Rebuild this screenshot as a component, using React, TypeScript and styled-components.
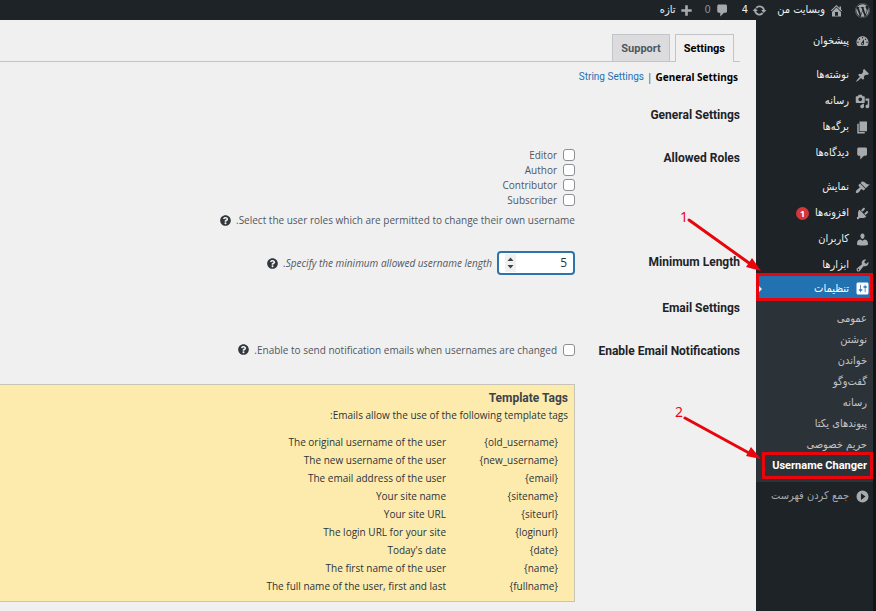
import React from 'react';
import styled, { createGlobalStyle, css } from 'styled-components';
import { FaWordpress, FaQuestionCircle } from 'react-icons/fa';

const sans = "'Open Sans', 'Noto Sans', sans-serif";
const strong = "Roboto, 'DejaVu Sans', sans-serif";
const humanist = "'Noto Sans', 'DejaVu Sans', sans-serif";
const persian = "'DejaVu Sans Condensed', 'DejaVu Sans', sans-serif";

const GlobalStyle = createGlobalStyle`
  *, *::before, *::after { box-sizing: border-box; }
  html { overflow: hidden; }
  body { margin: 0; background: #f0f0f1; color: #3c434a; font: 10px/18px ${sans}; }
  a { text-decoration: none; color: inherit; }
  ul { list-style: none; margin: 0; padding: 0; }
`;

const Page = styled.div`
  position: relative;
  min-height: 100vh;
  display: flex;
  flex-direction: column;
  border-right: 3px solid #101517;
`;

const TopBar = styled.nav`
  height: 20px;
  display: flex;
  align-items: center;
  padding: 0 3px;
  background: #1d2327;
  color: #f0f0f1;
  font: 11px/18px ${persian};
`;

const BarItem = styled.a<{ $gap: number; $dim?: boolean }>`
  display: flex;
  align-items: center;
  gap: 4px;
  margin-inline-end: ${(p) => p.$gap}px;
  white-space: nowrap;
  color: ${(p) => (p.$dim ? '#8c9196' : '#f0f0f1')};
`;

const Columns = styled.div`
  flex: 1;
  display: flex;
`;

const Sidebar = styled.nav`
  flex: none;
  width: 117px;
  background: #1d2327;
  color: #f0f0f1;
  font: 11px/18px ${persian};
`;

const MenuGroup = styled.ul`
  margin-top: 8px;
`;

const MenuLink = styled.a<{ $current?: boolean }>`
  display: flex;
  align-items: center;
  gap: 6px;
  height: 26px;
  padding: 0 3px;
  white-space: nowrap;
  ${(p) =>
    p.$current &&
    css`
      position: relative;
      height: 28px;
      margin-top: -5px;
      background: #2271b1;
      border: 3px solid #e8060c;
      padding: 3px 0 0;
      color: #fff;
      &::after {
        content: '';
        position: absolute;
        left: 0;
        top: 10px;
        border: 3px solid transparent;
        border-right: 0;
        border-left-color: #f0f0f1;
      }
    `}
`;

const Badge = styled.span`
  width: 13px;
  height: 13px;
  border-radius: 50%;
  background: #d63638;
  color: #fff;
  font: bold 9px/13px ${humanist};
  text-align: center;
`;

const Submenu = styled.ul`
  background: #2c3338;
  padding: 7px 0 3px;
  color: #c3c4c7;
`;

const SubLink = styled.a<{ $current?: boolean }>`
  display: flex;
  align-items: center;
  height: 21px;
  padding: 0 6px;
  white-space: nowrap;
  ${(p) =>
    p.$current &&
    css`
      height: 27px;
      margin-top: -3px;
      margin-left: 6px;
      padding: 0 3px;
      border: 3px solid #e8060c;
      color: #fff;
      font: bold 11px/18px ${strong};
    `}
`;

const Collapse = styled.button`
  display: flex;
  align-items: center;
  gap: 6px;
  width: 100%;
  height: 28px;
  padding: 0 3px;
  border: 0;
  background: none;
  color: #a7aaad;
  font: 11px/18px ${persian};
  white-space: nowrap;
`;

const Main = styled.main`
  flex: 1;
  min-width: 0;
`;

const Tabs = styled.div`
  display: flex;
  gap: 5px;
  margin-right: 16px;
  padding: 14px 6px 0;
  border-bottom: 1px solid #c3c4c7;
`;

const Tab = styled.a<{ $active?: boolean }>`
  height: ${(p) => (p.$active ? 28 : 27)}px;
  padding: 4px 8px;
  border: 1px solid #c3c4c7;
  border-bottom: 0;
  background: ${(p) => (p.$active ? '#f0f0f1' : '#dcdcde')};
  color: ${(p) => (p.$active ? '#000' : '#50575e')};
  margin-bottom: ${(p) => (p.$active ? -1 : 0)}px;
  font: bold 11px/20px ${strong};
`;

const SubTabs = styled.div`
  display: flex;
  gap: 3px;
  padding: 6px 18px 0;
`;

const SubTab = styled.a<{ $active?: boolean }>`
  color: ${(p) => (p.$active ? '#000' : '#2271b1')};
  font: ${(p) => (p.$active ? `bold 10px/18px ${humanist}` : `10px/18px ${strong}`)};
`;

const Form = styled.form`
  display: grid;
  grid-template-columns: 149px 1fr;
  column-gap: 16px;
  padding: 19px 16px 0 0;
`;

const Title = styled.h2`
  grid-column: 1 / -1;
  margin: 0;
  font: bold 12px/20px ${strong};
  color: #1d2327;
`;

const Heading = styled.div<{ $top: number }>`
  padding-top: ${(p) => p.$top}px;
  font: bold 12px/20px ${strong};
  color: #1d2327;
  white-space: nowrap;
`;

const Field = styled.div<{ $top: number; $bottom: number }>`
  padding: ${(p) => p.$top}px 0 ${(p) => p.$bottom}px;
  min-width: 0;
  color: #50575e;
`;

const CheckRow = styled.label`
  display: flex;
  align-items: center;
  gap: 6px;
  height: 15px;
  white-space: nowrap;
`;

const Check = styled.input`
  appearance: none;
  flex: none;
  width: 12px;
  height: 12px;
  margin: 0;
  border: 1px solid #8c8f94;
  border-radius: 3px;
  background: #fff;
`;

const Line = styled.div<{ $top?: number }>`
  display: flex;
  align-items: center;
  gap: 5px;
  margin-top: ${(p) => p.$top ?? 0}px;
  white-space: nowrap;
`;

const Help = styled.button`
  display: flex;
  padding: 0;
  border: 0;
  background: none;
  color: #32373c;
`;

const NumberBox = styled.span`
  display: flex;
  align-items: center;
  width: 78px;
  height: 24px;
  padding: 0 6px;
  border: 2px solid #2f73ad;
  border-radius: 4px;
  background: #fff;
`;

const NumberInput = styled.input`
  flex: 1;
  min-width: 0;
  padding: 0;
  border: 0;
  outline: 0;
  background: none;
  color: #2c3338;
  font: 12px/18px ${sans};
`;

const Stepper = styled.span`
  display: flex;
  align-items: center;
  justify-content: center;
  width: 11px;
  height: 18px;
  background: #f0f0f1;
`;

const TagBox = styled.section`
  grid-column: 2;
  padding: 5px 6px 6px;
  border: 1px solid #c8c5b8;
  border-inline-end: 0;
  background: #fdebae;
  color: #2c3338;
  line-height: 17px;
`;

const TagTitle = styled.h3`
  margin: 0;
  color: #3c434a;
  font: bold 12px/17px ${strong};
`;

const TagTable = styled.table`
  margin-top: 9px;
  border-collapse: collapse;
  td { padding: 0 10px 0 0; height: 18px; line-height: 18px; white-space: nowrap; }
  td:first-child { width: 112px; }
`;

const Overlay = styled.svg`
  position: absolute;
  top: 200px;
  right: 111px;
  pointer-events: none;
`;

const Step = styled.span<{ $top: number; $right: number }>`
  position: absolute;
  top: ${(p) => p.$top}px;
  right: ${(p) => p.$right}px;
  color: #f0060c;
  font: 14px/18px ${humanist};
`;

const icons = {
  home: 'M16 8.5l1.53 1.53-1.06 1.06L10 4.6l-6.47 6.49-1.06-1.06L10 2.5l4 4v-2h2v4zm-6-2.46l6 5.99V18H4v-5.97zM12 17v-5H8v5h4z',
  dashboard: 'M3.76 16h12.48c1.1-1.37 1.76-3.11 1.76-5 0-4.42-3.58-8-8-8s-8 3.58-8 8c0 1.89.66 3.63 1.76 5zM10 4c.55 0 1 .45 1 1s-.45 1-1 1-1-.45-1-1 .45-1 1-1zM6 6c.55 0 1 .45 1 1s-.45 1-1 1-1-.45-1-1 .45-1 1-1zm8 0c.55 0 1 .45 1 1s-.45 1-1 1-1-.45-1-1 .45-1 1-1zm-5.37 5.55L12 7v6c0 1.1-.9 2-2 2s-2-.9-2-2c0-.57.24-1.08.63-1.45zM4 10c.55 0 1 .45 1 1s-.45 1-1 1-1-.45-1-1 .45-1 1-1zm12 0c.55 0 1 .45 1 1s-.45 1-1 1-1-.45-1-1 .45-1 1-1zm-5 3c0-.55-.45-1-1-1s-1 .45-1 1 .45 1 1 1 1-.45 1-1z',
  pin: 'M10.44 3.02l1.82-1.82 6.36 6.35-1.83 1.82c-1.05-.68-2.48-.57-3.41.36l-.75.75c-.92.93-1.04 2.35-.35 3.41l-1.83 1.82-2.41-2.41-2.8 2.79c-.42.42-3.38 2.71-3.8 2.29s1.86-3.39 2.28-3.81l2.79-2.79L4.1 9.36l1.83-1.82c1.05.69 2.48.57 3.4-.36l.75-.75c.93-.92 1.05-2.35.36-3.41z',
  media: 'M13 11V4c0-.55-.45-1-1-1h-1.67L9 1H5L3.67 3H2c-.55 0-1 .45-1 1v7c0 .55.45 1 1 1h10c.55 0 1-.45 1-1zM7 4.5c1.38 0 2.5 1.12 2.5 2.5S8.38 9.5 7 9.5 4.5 8.38 4.5 7 5.62 4.5 7 4.5zM14 6h5v10.5c0 1.38-1.12 2.5-2.5 2.5S14 17.88 14 16.5s1.12-2.5 2.5-2.5c.17 0 .34.02.5.05V9h-3V6zm-4 8.05V13h2v3.5c0 1.38-1.12 2.5-2.5 2.5S7 17.88 7 16.5 8.12 14 9.5 14c.17 0 .34.02.5.05z',
  page: 'M6 15V2h10v13H6zm-1 1h8v2H3V5h2v11z',
  comment: 'M5 2h9c1.1 0 2 .9 2 2v7c0 1.1-.9 2-2 2h-2l-5 5v-5H5c-1.1 0-2-.9-2-2V4c0-1.1.9-2 2-2z',
  brush: 'M14.48 11.06L7.41 3.99l1.5-1.5c.5-.56 2.3-.47 3.51.32 1.21.8 1.43 1.28 2.91 2.1 1.18.64 2.45 1.26 4.45.85zm-.71.71L6.7 4.7 4.93 6.47c-.39.39-.39 1.02 0 1.41l1.06 1.06c.39.39.39 1.03 0 1.42-.6.6-1.43 1.11-2.21 1.69-.35.26-.7.53-1.01.84C1.43 14.23.4 16.08 1.4 17.07c.99 1 2.84-.03 4.18-1.36.31-.31.58-.66.85-1.02.57-.78 1.08-1.61 1.69-2.21.39-.39 1.02-.39 1.41 0l1.06 1.06c.39.39 1.02.39 1.41 0z',
  plug: 'M13.11 4.36L9.87 7.6 8 5.73l3.24-3.24c.35-.34 1.05-.2 1.56.32.52.51.66 1.21.31 1.55zm-8 1.77l.91-1.12 9.01 9.01-1.19.84c-.71.71-2.63 1.16-3.82 1.16H6.14L4.9 17.26c-.59.59-1.54.59-2.12 0-.59-.58-.59-1.53 0-2.12l1.24-1.24v-3.88c0-1.13.4-3.19 1.09-3.89zm7.26 3.97l3.24-3.24c.34-.35 1.04-.21 1.55.31.52.51.66 1.21.31 1.55l-3.24 3.25z',
  user: 'M10 9.25c-2.27 0-2.73-3.44-2.73-3.44C7 4.02 7.82 2 9.97 2c2.16 0 2.98 2.02 2.71 3.81 0 0-.41 3.44-2.68 3.44zm0 2.57L12.72 10c2.39 0 4.52 2.33 4.52 4.53v2.49s-3.65 1.13-7.24 1.13c-3.65 0-7.24-1.13-7.24-1.13v-2.49c0-2.25 1.94-4.48 4.47-4.48z',
  wrench: 'M16.68 9.77c-1.34 1.34-3.3 1.67-4.95.99l-5.41 6.52c-.99.99-2.59.99-3.58 0s-.99-2.59 0-3.57l6.52-5.42c-.68-1.65-.35-3.61.99-4.95 1.28-1.28 3.12-1.62 4.72-1.06l-2.89 2.89 2.82 2.82 2.86-2.87c.53 1.58.18 3.39-1.08 4.65zM3.81 16.21c.4.39 1.04.39 1.43 0 .4-.4.4-1.04 0-1.43-.39-.4-1.03-.4-1.43 0-.39.39-.39 1.03 0 1.43z',
  settings: 'M18 16V4c0-1.1-.9-2-2-2H4c-1.1 0-2 .9-2 2v12c0 1.1.9 2 2 2h12c1.1 0 2-.9 2-2zM8 11h1c.55 0 1 .45 1 1s-.45 1-1 1H8v1.5c0 .28-.22.5-.5.5s-.5-.22-.5-.5V13H6c-.55 0-1-.45-1-1s.45-1 1-1h1V5.5c0-.28.22-.5.5-.5s.5.22.5.5V11zm5-2h-1c-.55 0-1-.45-1-1s.45-1 1-1h1V5.5c0-.28.22-.5.5-.5s.5.22.5.5V7h1c.55 0 1 .45 1 1s-.45 1-1 1h-1v5.5c0 .28-.22.5-.5.5s-.5-.22-.5-.5V9z',
  update: 'M10.2 3.28c3.53 0 6.43 2.61 6.92 6h2.08l-3.5 4-3.5-4h2.32c-.45-1.97-2.21-3.45-4.32-3.45-1.45 0-2.73.71-3.54 1.78L4.95 5.66C6.23 4.2 8.11 3.28 10.2 3.28zm-.4 13.44c-3.52 0-6.43-2.61-6.92-6H.8l3.5-4c1.17 1.33 2.33 2.67 3.5 4H5.48c.45 1.97 2.21 3.45 4.32 3.45 1.45 0 2.73-.71 3.54-1.78l1.71 1.95c-1.28 1.46-3.15 2.38-5.25 2.38z',
  plus: 'M18 8v4h-6v6H8v-6H2V8h6V2h4v6z',
  collapse: 'M10 2a8 8 0 1 1 0 16a8 8 0 1 1 0-16zM8 5.5v9l6-4.5z',
};

type IconName = keyof typeof icons;

function Icon({ name, size = 15, color = '#a7aaad' }: { name: IconName; size?: number; color?: string }) {
  return (
    <svg width={size} height={size} viewBox="0 0 20 20" fill={color} fillRule="evenodd" aria-hidden="true">
      <path d={icons[name]} />
    </svg>
  );
}

const menu: { label: string; icon: IconName; badge?: string; current?: boolean }[][] = [
  [{ label: 'پیشخوان', icon: 'dashboard' }],
  [
    { label: 'نوشته‌ها', icon: 'pin' },
    { label: 'رسانه', icon: 'media' },
    { label: 'برگه‌ها', icon: 'page' },
    { label: 'دیدگاه‌ها', icon: 'comment' },
  ],
  [
    { label: 'نمایش', icon: 'brush' },
    { label: 'افزونه‌ها', icon: 'plug', badge: '1' },
    { label: 'کاربران', icon: 'user' },
    { label: 'ابزارها', icon: 'wrench' },
    { label: 'تنظیمات', icon: 'settings', current: true },
  ],
];

const submenu = ['عمومی', 'نوشتن', 'خواندن', 'گفت‌وگو', 'رسانه', 'پیوندهای یکتا', 'حریم خصوصی'];

const tags = [
  ['{old_username}', 'The original username of the user'],
  ['{new_username}', 'The new username of the user'],
  ['{email}', 'The email address of the user'],
  ['{sitename}', 'Your site name'],
  ['{siteurl}', 'Your site URL'],
  ['{loginurl}', 'The login URL for your site'],
  ['{date}', "Today's date"],
  ['{name}', 'The first name of the user'],
  ['{fullname}', 'The full name of the user, first and last'],
];

function HelpButton() {
  return (
    <Help type="button" aria-label="Help">
      <FaQuestionCircle size={11} />
    </Help>
  );
}

export default function App() {
  return (
    <Page dir="rtl">
      <GlobalStyle />
      <TopBar>
        <BarItem href="#" $gap={11} aria-label="WordPress"><FaWordpress size={15} color="#a7aaad" /></BarItem>
        <BarItem href="#" $gap={10}><Icon name="home" />وبسایت من</BarItem>
        <BarItem href="#" $gap={12}><Icon name="update" />4</BarItem>
        <BarItem href="#" $gap={12} $dim><Icon name="comment" />0</BarItem>
        <BarItem href="#" $gap={0}><Icon name="plus" size={13} />تازه</BarItem>
      </TopBar>
      <Columns>
        <Sidebar>
          {menu.map((group, i) => (
            <MenuGroup key={i}>
              {group.map((item) => (
                <li key={item.label}>
                  <MenuLink href="#" $current={item.current}>
                    <Icon name={item.icon} color={item.current ? '#fff' : undefined} />
                    {item.label}
                    {item.badge && <Badge>{item.badge}</Badge>}
                  </MenuLink>
                </li>
              ))}
            </MenuGroup>
          ))}
          <Submenu>
            {submenu.map((label) => (
              <li key={label}><SubLink href="#">{label}</SubLink></li>
            ))}
            <li><SubLink href="#" $current>Username Changer</SubLink></li>
          </Submenu>
          <Collapse type="button"><Icon name="collapse" />جمع کردن فهرست</Collapse>
        </Sidebar>
        <Main>
          <Tabs>
            <Tab href="#" $active>Settings</Tab>
            <Tab href="#">Support</Tab>
          </Tabs>
          <SubTabs>
            <SubTab href="#" $active>General Settings</SubTab>
            <span>|</span>
            <SubTab href="#">String Settings</SubTab>
          </SubTabs>
          <Form>
            <Title>General Settings</Title>
            <Heading $top={23}>Allowed Roles</Heading>
            <Field $top={22} $bottom={0}>
              {['Editor', 'Author', 'Contributor', 'Subscriber'].map((role) => (
                <CheckRow key={role}><Check type="checkbox" />{role}</CheckRow>
              ))}
              <Line $top={4}>Select the user roles which are permitted to change their own username.<HelpButton /></Line>
            </Field>
            <Heading $top={23}><label htmlFor="min-length">Minimum Length</label></Heading>
            <Field $top={22} $bottom={23}>
              <Line>
                <NumberBox>
                  <NumberInput id="min-length" type="text" inputMode="numeric" defaultValue="5" />
                  <Stepper>
                    <svg width="7" height="12" viewBox="0 0 7 12" fill="#3c434a" aria-hidden="true">
                      <path d="M0.5 4L3.5 0.5L6.5 4zM0.5 8L3.5 11.5L6.5 8z" />
                    </svg>
                  </Stepper>
                </NumberBox>
                <i>Specify the minimum allowed username length.</i>
                <HelpButton />
              </Line>
            </Field>
            <Title>Email Settings</Title>
            <Heading $top={23}>Enable Email Notifications</Heading>
            <Field $top={24} $bottom={27}>
              <Line>
                <CheckRow><Check type="checkbox" />Enable to send notification emails when usernames are changed.</CheckRow>
                <HelpButton />
              </Line>
            </Field>
            <TagBox>
              <TagTitle>Template Tags</TagTitle>
              <div>Emails allow the use of the following template tags:</div>
              <TagTable>
                <tbody>
                  {tags.map(([tag, text]) => (
                    <tr key={tag}><td><bdi>{tag}</bdi></td><td>{text}</td></tr>
                  ))}
                </tbody>
              </TagTable>
            </TagBox>
          </Form>
        </Main>
      </Columns>
      <Overlay width="92" height="262" viewBox="0 0 92 262" fill="#e8060c" stroke="#e8060c" aria-hidden="true">
        <path d="M19 20L79 63M15 218L79 253" strokeWidth="3" strokeLinecap="round" fill="none" />
        <path d="M91 71L76 67L82 58zM91 259L76 256L81 247z" stroke="none" />
      </Overlay>
      <Step $top={208} $right={185}>1</Step>
      <Step $top={403} $right={190}>2</Step>
    </Page>
  );
}
